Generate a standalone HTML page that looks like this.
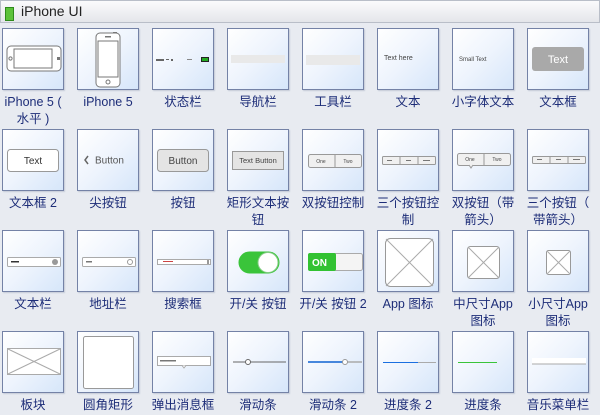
<!DOCTYPE html>
<html><head><meta charset="utf-8">
<style>
body{margin:0;width:600px;height:415px;background:#e8ebf1;font-family:"Liberation Sans","Noto Sans CJK SC",sans-serif;overflow:hidden;position:relative}
.hd{position:absolute;left:0;top:0;width:598px;height:21px;border:1px solid #b9bec8;background:linear-gradient(#fbfbfc,#e4e6ea);}
.hd .ic{position:absolute;left:4px;top:6px;width:7px;height:12px;background:#5cc23a;border:1px solid #2f8a1c}
.hd span{position:absolute;left:20px;top:2px;font-size:14px;color:#222}
.t{position:absolute;width:60px;height:60px;border:1px solid #7482a6;background:linear-gradient(135deg,#fff 0%,#eef4fd 50%,#d6e6fa 100%);box-shadow:1px 1px 1px #c5cbd8}
.t svg{position:absolute;left:0;top:0}
.l{position:absolute;width:76px;text-align:center;font-size:12.5px;line-height:17px;color:#1d2d78}
</style></head><body>
<div class="hd"><div class="ic"></div><span>iPhone UI</span></div>

<!-- row 1 -->
<div class="t" style="left:2px;top:28px"><svg width="60" height="60"><rect x="4" y="17" width="54" height="25" rx="4" fill="#fff" stroke="#777"/><rect x="11" y="20" width="38" height="19" fill="#fff" stroke="#777"/><circle cx="7.5" cy="29.5" r="1.6" fill="none" stroke="#777"/><rect x="54" y="28" width="3" height="3" fill="#777"/></svg></div>
<div class="l" style="left:-5px;top:94px">iPhone 5 (<br>水平 )</div>
<div class="t" style="left:77px;top:28px"><svg width="60" height="60"><rect x="18" y="4" width="24" height="54" rx="4" fill="#fff" stroke="#777"/><rect x="20" y="12" width="20" height="36" fill="#fff" stroke="#777"/><circle cx="30" cy="53" r="2" fill="none" stroke="#777"/><rect x="27" y="7" width="6" height="1.5" fill="#777"/><rect x="35" y="3" width="4" height="1" fill="#777"/></svg></div>
<div class="l" style="left:70px;top:94px">iPhone 5</div>
<div class="t" style="left:152px;top:28px"><svg width="60" height="60"><rect x="3" y="30" width="8" height="2" fill="#666"/><rect x="13" y="30" width="3" height="1" fill="#666"/><rect x="18" y="30" width="2" height="2" fill="#666"/><rect x="34" y="30" width="5" height="1" fill="#888"/><rect x="49" y="29" width="6" height="3" fill="#2a2"/><rect x="48.5" y="28.5" width="7" height="4" fill="none" stroke="#222"/></svg></div>
<div class="l" style="left:145px;top:94px">状态栏</div>
<div class="t" style="left:227px;top:28px"><svg width="60" height="60"><rect x="3" y="26" width="54" height="8" fill="#e9e9e9"/></svg></div>
<div class="l" style="left:220px;top:94px">导航栏</div>
<div class="t" style="left:302px;top:28px"><svg width="60" height="60"><rect x="3" y="26" width="54" height="10" fill="#e9e9e9"/></svg></div>
<div class="l" style="left:295px;top:94px">工具栏</div>
<div class="t" style="left:377px;top:28px"><svg width="60" height="60"><text x="6" y="31" font-size="7" fill="#444" font-family="Liberation Sans">Text here</text></svg></div>
<div class="l" style="left:370px;top:94px">文本</div>
<div class="t" style="left:452px;top:28px"><svg width="60" height="60"><text x="6" y="32" font-size="6" fill="#444" font-family="Liberation Sans">Small Text</text></svg></div>
<div class="l" style="left:445px;top:94px">小字体文本</div>
<div class="t" style="left:527px;top:28px"><svg width="60" height="60"><rect x="4" y="18" width="52" height="24" rx="3" fill="#a9a9a9"/><text x="30" y="34" font-size="11" fill="#fff" text-anchor="middle" font-family="Liberation Sans">Text</text></svg></div>
<div class="l" style="left:520px;top:94px">文本框</div>

<!-- row 2 -->
<div class="t" style="left:2px;top:129px"><svg width="60" height="60"><rect x="4.5" y="19.5" width="51" height="22" rx="3" fill="#fff" stroke="#999"/><text x="30" y="34" font-size="10" fill="#333" text-anchor="middle" font-family="Liberation Sans">Text</text></svg></div>
<div class="l" style="left:-5px;top:195px">文本框 2</div>
<div class="t" style="left:77px;top:129px"><svg width="60" height="60"><path d="M10 26 L7 30 L10 34" fill="none" stroke="#666" stroke-width="1.5"/><text x="17" y="33.5" font-size="10" fill="#555" font-family="Liberation Sans">Button</text></svg></div>
<div class="l" style="left:70px;top:195px">尖按钮</div>
<div class="t" style="left:152px;top:129px"><svg width="60" height="60"><rect x="4.5" y="19.5" width="51" height="22" rx="3" fill="#e4e4e4" stroke="#999"/><text x="30" y="34" font-size="10" fill="#444" text-anchor="middle" font-family="Liberation Sans">Button</text></svg></div>
<div class="l" style="left:145px;top:195px">按钮</div>
<div class="t" style="left:227px;top:129px"><svg width="60" height="60"><rect x="4.5" y="21.5" width="51" height="18" fill="#e4e4e4" stroke="#999"/><text x="30" y="33" font-size="7.5" fill="#444" text-anchor="middle" font-family="Liberation Sans">Text Button</text></svg></div>
<div class="l" style="left:220px;top:195px">矩形文本按<br>钮</div>
<div class="t" style="left:302px;top:129px"><svg width="60" height="60"><rect x="5.5" y="24.5" width="53" height="13" rx="2" fill="#f0f0f0" stroke="#999"/><line x1="32" y1="25" x2="32" y2="37" stroke="#999"/><text x="18" y="33" font-size="5" fill="#444" text-anchor="middle">One</text><text x="45" y="33" font-size="5" fill="#444" text-anchor="middle">Two</text></svg></div>
<div class="l" style="left:295px;top:195px">双按钮控制</div>
<div class="t" style="left:377px;top:129px"><svg width="60" height="60"><rect x="4.5" y="26.5" width="53" height="8" rx="1" fill="#f0f0f0" stroke="#999"/><line x1="22" y1="27" x2="22" y2="34" stroke="#999"/><line x1="40" y1="27" x2="40" y2="34" stroke="#999"/><rect x="9" y="30" width="5" height="1" fill="#777"/><rect x="28" y="30" width="5" height="1" fill="#777"/><rect x="45" y="30" width="7" height="1" fill="#777"/></svg></div>
<div class="l" style="left:370px;top:195px">三个按钮控<br>制</div>
<div class="t" style="left:452px;top:129px"><svg width="60" height="60"><rect x="4.5" y="23.5" width="53" height="12" rx="2" fill="#f0f0f0" stroke="#999"/><line x1="31" y1="24" x2="31" y2="35" stroke="#999"/><path d="M16 35 L18 38 L20 35" fill="#f0f0f0" stroke="#999"/><text x="17" y="31" font-size="5" fill="#444" text-anchor="middle">One</text><text x="44" y="31" font-size="5" fill="#444" text-anchor="middle">Two</text></svg></div>
<div class="l" style="left:445px;top:195px">双按钮（带<br>箭头）</div>
<div class="t" style="left:527px;top:129px"><svg width="60" height="60"><rect x="4.5" y="26.5" width="53" height="7" rx="1" fill="#f0f0f0" stroke="#999"/><line x1="22" y1="27" x2="22" y2="33" stroke="#999"/><line x1="40" y1="27" x2="40" y2="33" stroke="#999"/><rect x="9" y="29" width="5" height="1" fill="#777"/><rect x="28" y="29" width="5" height="1" fill="#777"/><rect x="45" y="29" width="7" height="1" fill="#777"/></svg></div>
<div class="l" style="left:520px;top:195px">三个按钮（<br>带箭头）</div>

<!-- row 3 -->
<div class="t" style="left:2px;top:230px"><svg width="60" height="60"><rect x="4.5" y="26.5" width="53" height="9" rx="1" fill="#fff" stroke="#aaa"/><rect x="8" y="30" width="8" height="1.5" fill="#333"/><circle cx="52" cy="31" r="3" fill="#999"/></svg></div>
<div class="l" style="left:-5px;top:296px">文本栏</div>
<div class="t" style="left:77px;top:230px"><svg width="60" height="60"><rect x="4.5" y="26.5" width="53" height="9" rx="1" fill="#fff" stroke="#aaa"/><rect x="8" y="30" width="6" height="1.5" fill="#777"/><circle cx="52" cy="31" r="2.5" fill="none" stroke="#999"/></svg></div>
<div class="l" style="left:70px;top:296px">地址栏</div>
<div class="t" style="left:152px;top:230px"><svg width="60" height="60"><rect x="4.5" y="28.5" width="53" height="5" fill="#fff" stroke="#aaa"/><rect x="10" y="30" width="10" height="1" fill="#c44"/><rect x="54" y="29" width="2" height="4" fill="#999"/></svg></div>
<div class="l" style="left:145px;top:296px">搜索框</div>
<div class="t" style="left:227px;top:230px"><svg width="60" height="60"><rect x="11" y="21" width="40" height="21" rx="10.5" fill="#3ac43a" stroke="#3ac43a"/><circle cx="40" cy="31.5" r="10" fill="#fff" stroke="#8c8"/></svg></div>
<div class="l" style="left:220px;top:296px">开/关 按钮</div>
<div class="t" style="left:302px;top:230px"><svg width="60" height="60"><rect x="5.5" y="22.5" width="54" height="17" rx="2" fill="#f4f4f4" stroke="#aaa"/><rect x="5" y="22" width="28" height="18" rx="2" fill="#32c232"/><text x="9" y="35" font-size="10" font-weight="bold" fill="#fff" font-family="Liberation Sans">ON</text></svg></div>
<div class="l" style="left:295px;top:296px">开/关 按钮 2</div>
<div class="t" style="left:377px;top:230px"><svg width="60" height="60"><rect x="7.5" y="7.5" width="48" height="48" rx="5" fill="#fff" stroke="#999"/><line x1="8" y1="8" x2="55" y2="55" stroke="#aaa"/><line x1="55" y1="8" x2="8" y2="55" stroke="#aaa"/></svg></div>
<div class="l" style="left:370px;top:296px">App 图标</div>
<div class="t" style="left:452px;top:230px"><svg width="60" height="60"><rect x="14.5" y="15.5" width="32" height="32" rx="3" fill="#fff" stroke="#999"/><line x1="15" y1="16" x2="46" y2="47" stroke="#aaa"/><line x1="46" y1="16" x2="15" y2="47" stroke="#aaa"/></svg></div>
<div class="l" style="left:445px;top:296px">中尺寸App<br>图标</div>
<div class="t" style="left:527px;top:230px"><svg width="60" height="60"><rect x="18.5" y="19.5" width="24" height="24" rx="2" fill="#fff" stroke="#999"/><line x1="19" y1="20" x2="42" y2="43" stroke="#aaa"/><line x1="42" y1="20" x2="19" y2="43" stroke="#aaa"/></svg></div>
<div class="l" style="left:520px;top:296px">小尺寸App<br>图标</div>

<!-- row 4 -->
<div class="t" style="left:2px;top:331px"><svg width="60" height="60"><rect x="4.5" y="16.5" width="53" height="26" fill="#fff" stroke="#aaa"/><line x1="5" y1="17" x2="57" y2="42" stroke="#aaa"/><line x1="57" y1="17" x2="5" y2="42" stroke="#aaa"/></svg></div>
<div class="l" style="left:-5px;top:397px">板块</div>
<div class="t" style="left:77px;top:331px"><svg width="60" height="60"><rect x="5.5" y="4.5" width="50" height="52" rx="2" fill="#fff" stroke="#999"/></svg></div>
<div class="l" style="left:70px;top:397px">圆角矩形</div>
<div class="t" style="left:152px;top:331px"><svg width="60" height="60"><rect x="4.5" y="24.5" width="53" height="9" fill="#fff" stroke="#aaa"/><rect x="7" y="28" width="16" height="1.5" fill="#777"/><path d="M29 33.5 L31 36 L33 33.5" fill="#fff" stroke="#aaa"/></svg></div>
<div class="l" style="left:145px;top:397px">弹出消息框</div>
<div class="t" style="left:227px;top:331px"><svg width="60" height="60"><line x1="5" y1="30" x2="58" y2="30" stroke="#666"/><circle cx="20" cy="30" r="2.5" fill="#fff" stroke="#666"/></svg></div>
<div class="l" style="left:220px;top:397px">滑动条</div>
<div class="t" style="left:302px;top:331px"><svg width="60" height="60"><line x1="5" y1="30" x2="59" y2="30" stroke="#aaa" stroke-width="1.5"/><line x1="5" y1="30" x2="42" y2="30" stroke="#1a6fe0" stroke-width="1.5"/><circle cx="42" cy="30" r="2.5" fill="#fff" stroke="#999"/></svg></div>
<div class="l" style="left:295px;top:397px">滑动条 2</div>
<div class="t" style="left:377px;top:331px"><svg width="60" height="60"><line x1="5" y1="30.5" x2="58" y2="30.5" stroke="#aaa"/><line x1="5" y1="30.5" x2="40" y2="30.5" stroke="#1a6fe0"/></svg></div>
<div class="l" style="left:370px;top:397px">进度条 2</div>
<div class="t" style="left:452px;top:331px"><svg width="60" height="60"><line x1="5" y1="30.5" x2="44" y2="30.5" stroke="#3ac43a"/></svg></div>
<div class="l" style="left:445px;top:397px">进度条</div>
<div class="t" style="left:527px;top:331px"><svg width="60" height="60"><rect x="4" y="26" width="54" height="6" fill="#fff"/><line x1="4" y1="32" x2="58" y2="32" stroke="#aaa"/></svg></div>
<div class="l" style="left:520px;top:397px">音乐菜单栏</div>
</body></html>
